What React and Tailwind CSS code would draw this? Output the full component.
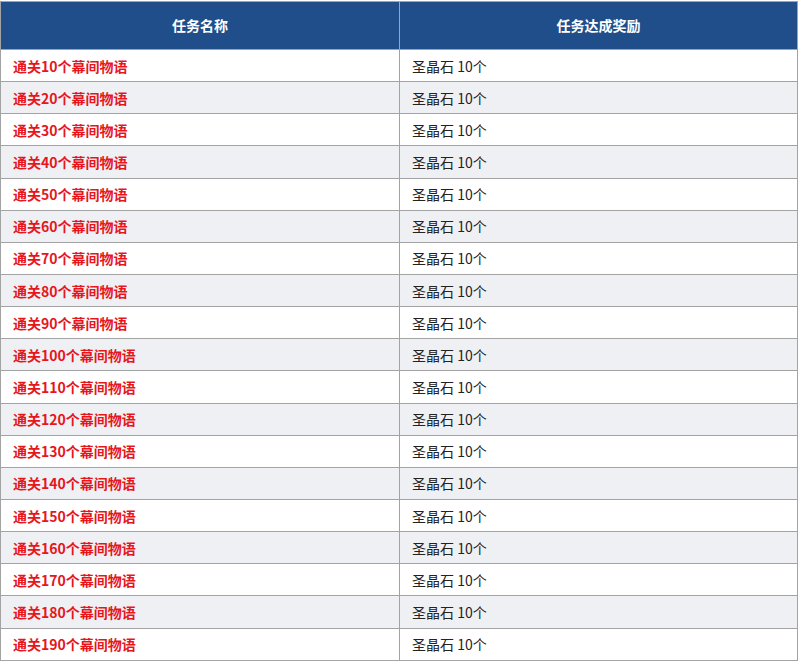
const rows = [10, 20, 30, 40, 50, 60, 70, 80, 90, 100, 110, 120, 130, 140, 150, 160, 170, 180, 190];

export default function App() {
    return (
        <div className="w-[800px] h-[662px] bg-white pt-px overflow-hidden" style={{ fontFamily: '"Noto Sans CJK SC", "Noto Sans", sans-serif' }}>
            <table className="w-[798px] border-collapse border border-[#a3a3a3] table-fixed">
                <thead>
                    <tr className="h-[48px] bg-[#1f4e8b] text-white text-[14px] font-bold">
                        <th className="w-[399px] border border-[#a3a3a3] font-bold">任务名称</th>
                        <th className="border border-[#a3a3a3] font-bold">任务达成奖励</th>
                    </tr>
                </thead>
                <tbody>
                    {rows.map((n, i) => (
                        <tr key={n} className={`h-[32.15px] ${i % 2 === 1 ? "bg-[#eef0f4]" : "bg-white"}`}>
                            <td className="border border-[#a3a3a3] pl-3 text-[14px] font-bold text-[#e6161d] leading-none">
                                通关{n}个幕间物语
                            </td>
                            <td className="border border-[#a3a3a3] pl-3 text-[14px] text-[#222] leading-none">
                                圣晶石 10个
                            </td>
                        </tr>
                    ))}
                </tbody>
            </table>
        </div>
    );
}
